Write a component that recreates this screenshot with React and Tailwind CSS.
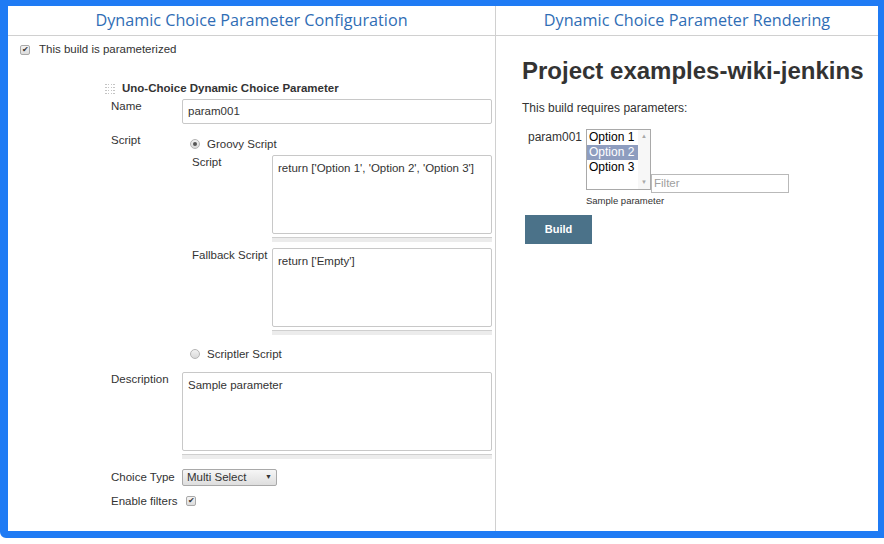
import React from 'react';

const Check = () => (
    <div className="w-[10px] h-[10px] border border-[#a9a9a9] rounded-[2px] bg-gradient-to-b from-[#f4f4f4] to-[#dcdcdc] flex items-center justify-center text-[8px] leading-none text-[#333]">
        ✔
    </div>
);

const Radio = ({ on }) => (
    <div className="w-[10px] h-[10px] rounded-full border border-[#b5b5b5] bg-gradient-to-b from-[#f2f2f2] to-[#d9d9d9] flex items-center justify-center mb-[3px]">
        {on && <div className="w-[4px] h-[4px] rounded-full bg-[#555]" />}
    </div>
);

const Area = ({ text, className = "" }) => (
    <div className={`flex-1 ${className}`}>
        <div className="h-[79px] border border-[#c8c8c8] rounded-[2px] px-[5px] pt-[6px] text-[11.5px] leading-[13px]">{text}</div>
        <div className="mt-[3px] h-[5px] bg-[#ececec] border-t border-[#cfcfcf]" />
    </div>
);

const Label = ({ children, w = "w-[71px]" }) => (
    <div className={`${w} shrink-0 pt-[1px] text-[11.5px] leading-[13px] text-[#333]`}>{children}</div>
);

const Handle = () => (
    <div className="w-[10px] h-[11px] grid grid-cols-4 gap-[1px]">
        {[...Array(16)].map((_, i) => (
            <div key={i} className="w-[1.5px] h-[1.5px] bg-[#c4c4c4]" />
        ))}
    </div>
);

const Title = ({ children }) => (
    <div className="h-[30px] border-b border-[#d0d0d0] flex items-center justify-center text-[16.2px] text-[#2f6db5] font-['Open_Sans',sans-serif]">
        {children}
    </div>
);

export default function App() {
    return (
        <div className="w-[884px] h-[544px] bg-white font-['Liberation_Sans',Arial,sans-serif] text-[#333]">
            <div className="h-[538px] border-[#1f7bf4] border-l-[8px] border-t-[6px] border-r-[6px] border-b-[7px] rounded-bl-[6px] flex">
                <div className="w-[488px] border-r border-[#d0d0d0] overflow-hidden">
                    <Title>Dynamic Choice Parameter Configuration</Title>

                    <div className="mt-[8px] ml-[12px] h-[12px] flex items-center gap-[9px] text-[11.5px]">
                        <Check />
                        <span>This build is parameterized</span>
                    </div>

                    <div className="mt-[27px] ml-[97px] h-[12px] flex items-center gap-[7px]">
                        <Handle />
                        <span className="text-[11.5px] font-bold text-[#333]">Uno-Choice Dynamic Choice Parameter</span>
                    </div>

                    <div className="ml-[103px] pr-[3px]">
                        <div className="mt-[4px] flex">
                            <Label>Name</Label>
                            <div className="flex-1 h-[25px] border border-[#c8c8c8] rounded-[2px] px-[5px] flex items-center text-[11.5px]">param001</div>
                        </div>

                        <div className="mt-[9px] flex">
                            <Label>Script</Label>
                            <div className="flex-1">
                                <div className="mt-[5px] h-[14px] flex items-center gap-[7px] ml-[8px] text-[11.5px]">
                                    <Radio on />
                                    <span>Groovy Script</span>
                                </div>
                                <div className="mt-[3px] flex ml-[10px]">
                                    <Label w="w-[80px]">Script</Label>
                                    <Area text="return ['Option 1', 'Option 2', 'Option 3']" />
                                </div>
                                <div className="mt-[6px] flex ml-[10px]">
                                    <Label w="w-[80px]">Fallback Script</Label>
                                    <Area text="return ['Empty']" />
                                </div>
                                <div className="mt-[13px] h-[14px] flex items-center gap-[7px] ml-[8px] text-[11.5px]">
                                    <Radio />
                                    <span>Scriptler Script</span>
                                </div>
                            </div>
                        </div>

                        <div className="mt-[10px] flex">
                            <Label>Description</Label>
                            <Area text="Sample parameter" />
                        </div>

                        <div className="mt-[10px] flex items-center">
                            <div className="w-[71px] shrink-0 text-[11.5px]">Choice Type</div>
                            <div className="w-[95px] h-[17px] border border-[#a9a9a9] rounded-[2px] bg-gradient-to-b from-[#f6f6f6] to-[#dedede] flex items-center justify-between px-[4px] text-[11.5px]">
                                <span>Multi Select</span>
                                <span className="text-[7px]">▼</span>
                            </div>
                        </div>

                        <div className="mt-[8px] h-[14px] flex items-center">
                            <div className="w-[75px] shrink-0 text-[11.5px]">Enable filters</div>
                            <Check />
                        </div>
                    </div>
                </div>

                <div className="flex-1">
                    <Title>Dynamic Choice Parameter Rendering</Title>
                    <div className="pl-[26px]">
                        <h1 className="mt-[20px] text-[24px] leading-[30px] font-bold text-[#333]">Project examples-wiki-jenkins</h1>
                        <p className="mt-[15px] text-[12px] leading-[14px]">This build requires parameters:</p>

                        <div className="mt-[14px] flex">
                            <div className="w-[64px] pl-[6px] pt-[1px] text-[12px] leading-[14px]">param001</div>
                            <div>
                                <div className="flex items-end">
                                    <div className="w-[65px] h-[61px] border border-[#a9a9a9] flex">
                                        <div className="flex-1 text-[12px] leading-[15px] text-black">
                                            <div className="pl-[2px]">Option 1</div>
                                            <div className="pl-[2px] bg-[#8e9dbf] text-white">Option 2</div>
                                            <div className="pl-[2px]">Option 3</div>
                                        </div>
                                        <div className="w-[12px] flex flex-col justify-between items-center text-[6px] text-[#a8a8a8] py-[2px] bg-[#f7f7f7]">
                                            <span>▲</span>
                                            <span>▼</span>
                                        </div>
                                    </div>
                                    <div className="w-[138px] h-[19px] border border-[#b9b9b9] -mb-[3px] flex items-center px-[2px] text-[11.5px] text-[#a0a0a0]">Filter</div>
                                </div>
                                <div className="mt-[5px] text-[9.5px] leading-[12px]">Sample parameter</div>
                            </div>
                        </div>

                        <button className="mt-[8px] ml-[3px] w-[67px] h-[29px] bg-[#4b7289] text-white text-[11px] font-bold">Build</button>
                    </div>
                </div>
            </div>
        </div>
    );
}
